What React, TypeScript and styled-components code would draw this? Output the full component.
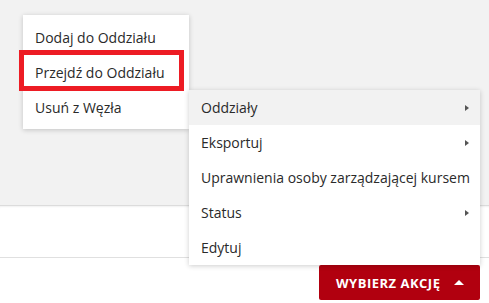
import React from "react";
import styled, { createGlobalStyle } from "styled-components";

const GlobalStyle = createGlobalStyle`
  html, body { margin: 0; padding: 0; background: #ffffff; }
  body { font-family: "Open Sans", "Liberation Sans", sans-serif; color: #2a2a2a; }
  * { box-sizing: border-box; }
`;

const Page = styled.div`
  position: relative;
  width: 489px;
  height: 303px;
  overflow: hidden;
  display: flex;
  flex-direction: column;
`;

const TopPanel = styled.div`
  height: 206px;
  background: #f2f2f2;
  border-bottom: 1px solid #dcdcdc;
  flex-shrink: 0;
`;

const ContentPanel = styled.div`
  height: 52px;
  background: #ffffff;
  border-bottom: 1px solid #e0e0e0;
  box-shadow: inset 0 2px 2px -1px rgba(0, 0, 0, 0.06);
  flex-shrink: 0;
`;

const Footer = styled.div`
  display: flex;
  justify-content: flex-end;
  padding: 7px 9px 0 0;
`;

const ActionButton = styled.button`
  width: 161px;
  height: 35px;
  border: none;
  border-radius: 2px;
  background: #b1000f;
  color: #ffffff;
  font-family: "Open Sans", "Liberation Sans", sans-serif;
  font-weight: 700;
  font-size: 13px;
  letter-spacing: 0.5px;
  display: flex;
  align-items: center;
  justify-content: flex-start;
  gap: 14px;
  padding: 0 0 0 17px;
  cursor: pointer;
`;

const Caret = styled.span<{ $dir: "up" | "right" }>`
  display: inline-block;
  width: 0;
  height: 0;
  ${(p) =>
    p.$dir === "up"
      ? `border-left: 5px solid transparent;
         border-right: 5px solid transparent;
         border-bottom: 5px solid #ffffff;`
      : `border-top: 3.5px solid transparent;
         border-bottom: 3.5px solid transparent;
         border-left: 4px solid #555555;`}
`;

const Menu = styled.ul<{ $left: number; $top: number; $width: number; $pad: string }>`
  position: absolute;
  left: ${(p) => p.$left}px;
  top: ${(p) => p.$top}px;
  width: ${(p) => p.$width}px;
  margin: 0;
  padding: ${(p) => p.$pad};
  list-style: none;
  background: #ffffff;
  box-shadow: 0 1px 5px rgba(0, 0, 0, 0.2);
`;

const MenuItem = styled.li<{ $active?: boolean }>`
  height: 35px;
  display: flex;
  align-items: center;
  justify-content: space-between;
  padding: 0 11px 0 12px;
  font-size: 14px;
  color: #2a2a2a;
  white-space: nowrap;
  background: ${(p) => (p.$active ? "#f2f2f2" : "#ffffff")};
`;

const Highlight = styled.div`
  position: absolute;
  left: 19px;
  top: 50px;
  width: 165px;
  height: 41px;
  border: 5px solid #ed1c24;
  pointer-events: none;
`;

export default function App() {
  return (
    <>
      <GlobalStyle />
      <Page>
        <TopPanel />
        <ContentPanel />
        <Footer>
          <ActionButton>
            WYBIERZ AKCJĘ
            <Caret $dir="up" />
          </ActionButton>
        </Footer>

        <Menu $left={23} $top={15} $width={166} $pad="5px 0 4px">
          <MenuItem>Dodaj do Oddziału</MenuItem>
          <MenuItem>Przejdź do Oddziału</MenuItem>
          <MenuItem>Usuń z Węzła</MenuItem>
        </Menu>

        <Menu $left={189} $top={90} $width={291} $pad="0">
          <MenuItem $active>
            Oddziały
            <Caret $dir="right" />
          </MenuItem>
          <MenuItem>
            Eksportuj
            <Caret $dir="right" />
          </MenuItem>
          <MenuItem>Uprawnienia osoby zarządzającej kursem</MenuItem>
          <MenuItem>
            Status
            <Caret $dir="right" />
          </MenuItem>
          <MenuItem>Edytuj</MenuItem>
        </Menu>

        <Highlight />
      </Page>
    </>
  );
}
